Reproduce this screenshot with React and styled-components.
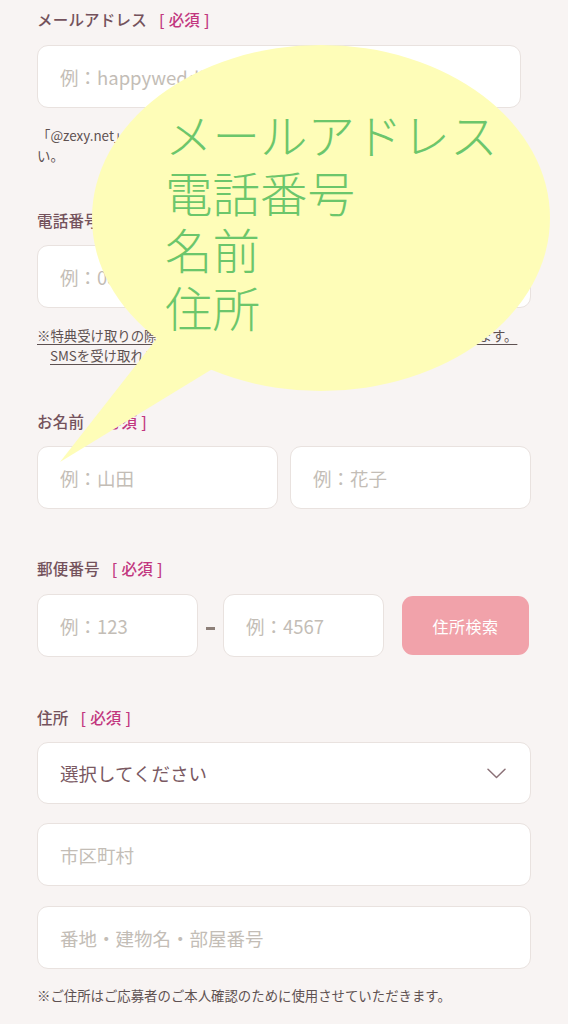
import React from "react";
import styled, { createGlobalStyle } from "styled-components";

const Global = createGlobalStyle`
  html, body { margin: 0; padding: 0; background: #f8f4f3; }
  body { font-family: "Noto Sans CJK JP", "Noto Sans", sans-serif; }
  * { box-sizing: border-box; }
`;

const Page = styled.div`
  position: relative;
  width: 568px;
  min-height: 1024px;
  padding: 8px 37px 40px 37px;
  background: #f8f4f3;
  overflow: hidden;
`;

const Section = styled.section`
  display: flex;
  flex-direction: column;
  margin-top: ${(p) => p.$top || 0}px;
  margin-right: ${(p) => p.$inset || 0}px;
`;

const Label = styled.div`
  display: flex;
  align-items: center;
  height: 22px;
  font-size: 15.5px;
  font-weight: 500;
  color: #74525c;
  margin-bottom: ${(p) => p.$gap || 14}px;
  letter-spacing: 0.2px;
`;

const Required = styled.span`
  color: #c2377f;
  margin-left: 12px;
  & > b { font-weight: 500; margin: 0 4px; }
`;

const Input = styled.input`
  display: block;
  width: ${(p) => (p.$w ? `${p.$w}px` : p.$grow ? "0" : "100%")};
  min-width: 0;
  flex: ${(p) => (p.$grow ? "1 1 0" : "none")};
  height: 63px;
  padding: 0 22px;
  border: 1px solid #e9e2df;
  border-radius: 11px;
  background: #ffffff;
  font-family: "Noto Sans CJK JP", "Noto Sans", sans-serif;
  font-size: 18.5px;
  color: #6d5a5a;
  outline: none;
  margin-top: ${(p) => p.$top || 0}px;
  &::placeholder { color: #c3bdb6; }
`;

const Row = styled.div`
  display: flex;
  align-items: center;
  gap: ${(p) => p.$gap ?? 12}px;
`;

const Dash = styled.span`
  display: block;
  flex: none;
  width: 9px;
  height: 3px;
  background: #8d7f78;
  margin: 6px 8px 0 8px;
`;

const SearchButton = styled.button`
  flex: none;
  width: 127px;
  height: 59px;
  margin-left: 18px;
  border: none;
  border-radius: 11px;
  background: #f1a2aa;
  color: #ffffff;
  font-family: "Noto Sans CJK JP", "Noto Sans", sans-serif;
  font-size: 16px;
  letter-spacing: 0.5px;
`;

const SelectBox = styled.div`
  display: flex;
  align-items: center;
  justify-content: space-between;
  height: 62px;
  padding: 0 24px 0 22px;
  border: 1px solid #e9e2df;
  border-radius: 11px;
  background: #ffffff;
  font-size: 18.5px;
  color: #7a5962;
`;

const Note = styled.p`
  margin: ${(p) => p.$top || 17}px 0 0 0;
  font-size: 13.4px;
  line-height: 20px;
  color: #5e5151;
  padding-left: ${(p) => (p.$hang ? "13px" : "0")};
  text-indent: ${(p) => (p.$hang ? "-13px" : "0")};
  text-decoration: ${(p) => (p.$underline ? "underline" : "none")};
  text-underline-offset: 3px;
  white-space: nowrap;
`;

const Bubble = styled.div`
  position: absolute;
  left: 0;
  top: 0;
  width: 568px;
  height: 480px;
  pointer-events: none;
`;

const BubbleShape = styled.svg`
  position: absolute;
  left: 0;
  top: 0;
`;

const BubbleText = styled.div`
  position: absolute;
  left: 165px;
  top: 105px;
  font-family: "Noto Sans CJK JP", "Noto Sans", sans-serif;
  font-weight: 300;
  font-size: 47.5px;
  line-height: 57.5px;
  color: #6cc66b;
  white-space: nowrap;
`;

function Req() {
  return (
    <Required>
      [<b>必須</b>]
    </Required>
  );
}

export default function App() {
  return (
    <>
      <Global />
      <Page>
        <Section $inset={10}>
          <Label $gap={15}>
            メールアドレス
            <Req />
          </Label>
          <Input placeholder="例：happywedding@zexy.net" />
          <Note>
            「@zexy.net」からのメールを受信できるよう、受信設定をご確認くださ
            <br />
            い。
          </Note>
        </Section>

        <Section $top={44}>
          <Label>
            電話番号
            <Req />
          </Label>
          <Input placeholder="例：08012345678" />
          <Note $hang $underline>
            ※特典受け取りの際に、SMSにてご本人確認をさせていただく場合があります。
            <br />
            SMSを受け取れる携帯電話番号をご入力ください。
          </Note>
        </Section>

        <Section $top={45}>
          <Label>
            お名前
            <Req />
          </Label>
          <Row $gap={12}>
            <Input $grow placeholder="例：山田" />
            <Input $grow placeholder="例：花子" />
          </Row>
        </Section>

        <Section $top={48}>
          <Label $gap={15}>
            郵便番号
            <Req />
          </Label>
          <Row $gap={0}>
            <Input $w={161} placeholder="例：123" />
            <Dash />
            <Input $w={161} placeholder="例：4567" />
            <SearchButton type="button">住所検索</SearchButton>
          </Row>
        </Section>

        <Section $top={49}>
          <Label>
            住所
            <Req />
          </Label>
          <SelectBox>
            <span>選択してください</span>
            <svg width="19" height="11" viewBox="0 0 19 11" fill="none">
              <polyline
                points="1,1.2 9.5,9.5 18,1.2"
                stroke="#8b7177"
                strokeWidth="1.5"
                strokeLinecap="round"
                strokeLinejoin="round"
              />
            </svg>
          </SelectBox>
          <Input $top={19} placeholder="市区町村" />
          <Input $top={20} placeholder="番地・建物名・部屋番号" />
          <Note $top={16}>
            ※ご住所はご応募者のご本人確認のために使用させていただきます。
          </Note>
        </Section>

        <Bubble>
          <BubbleShape width="568" height="480" viewBox="0 0 568 480">
            <ellipse cx="321" cy="218" rx="229" ry="173" fill="#fefdb8" />
            <polygon points="187,300 60,462 250,346" fill="#fefdb8" />
          </BubbleShape>
          <BubbleText>
            メールアドレス
            <br />
            電話番号
            <br />
            名前
            <br />
            住所
          </BubbleText>
        </Bubble>
      </Page>
    </>
  );
}
